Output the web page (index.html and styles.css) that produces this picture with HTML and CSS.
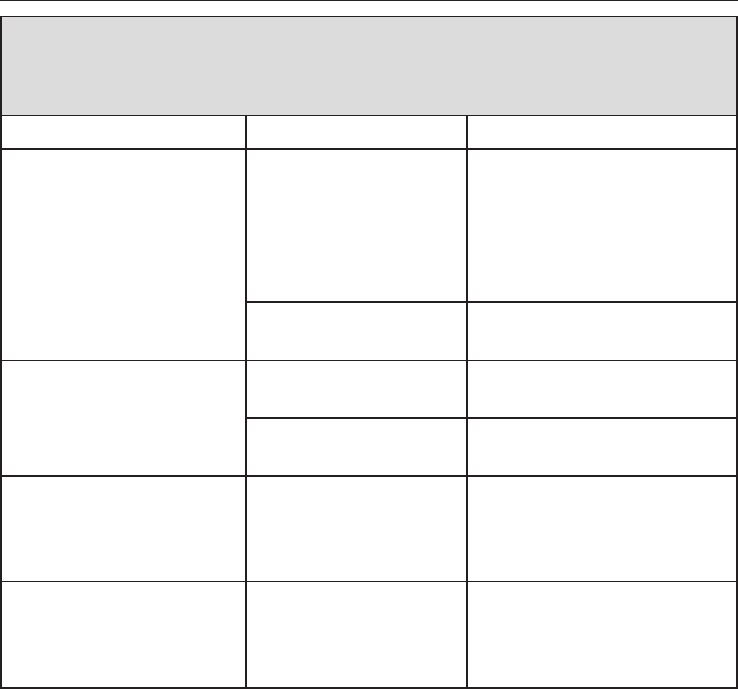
FILE: index.html
```html
<!DOCTYPE html>
<html lang="en">
<head>
<meta charset="utf-8">
<title>Table</title>
<link rel="stylesheet" href="styles.css">
</head>
<body>
<div class="rule"></div>
<div class="sheet">
  <div class="title-row"></div>
  <div class="row head-row">
    <div class="cell c1"></div>
    <div class="cell c2"></div>
    <div class="cell c3"></div>
  </div>
  <div class="row group">
    <div class="cell c1 b1"></div>
    <div class="sub">
      <div class="row a1">
        <div class="cell c2"></div>
        <div class="cell c3"></div>
      </div>
      <div class="row a2">
        <div class="cell c2"></div>
        <div class="cell c3"></div>
      </div>
    </div>
  </div>
  <div class="row group">
    <div class="cell c1 b2"></div>
    <div class="sub">
      <div class="row bb1">
        <div class="cell c2"></div>
        <div class="cell c3"></div>
      </div>
      <div class="row bb2">
        <div class="cell c2"></div>
        <div class="cell c3"></div>
      </div>
    </div>
  </div>
  <div class="row rc">
    <div class="cell c1"></div>
    <div class="cell c2"></div>
    <div class="cell c3"></div>
  </div>
  <div class="row rd">
    <div class="cell c1"></div>
    <div class="cell c2"></div>
    <div class="cell c3"></div>
  </div>
</div>
</body>
</html>
```

FILE: styles.css
```css
html, body {
  margin: 0;
  padding: 0;
  background: #ffffff;
  font-family: "Liberation Sans", Arial, sans-serif;
}
* { box-sizing: border-box; }

.rule {
  width: 738px;
  height: 1px;
  background: #231f20;
}

.sheet {
  width: 738px;
  margin-top: 15px;
  border-left: 2px solid #231f20;
  border-top: 1px solid #231f20;
}

.title-row {
  height: 99px;
  background: #dcdcdc;
  border-right: 2px solid #231f20;
  border-bottom: 1px solid #231f20;
}

.row { display: flex; }
.sub { display: flex; flex-direction: column; }

.cell { border-right: 2px solid #231f20; }
.c1 { width: 245px; }
.c2 { width: 221px; }
.c3 { width: 270px; }

.head-row .cell { height: 34px; border-bottom: 2px solid #231f20; }

.b1 { height: 211px; border-bottom: 1px solid #231f20; }
.a1 .cell { height: 153px; border-bottom: 2px solid #231f20; }
.a2 .cell { height: 58px; border-bottom: 1px solid #231f20; }

.b2 { height: 116px; border-bottom: 2px solid #231f20; }
.bb1 .cell { height: 58px; border-bottom: 2px solid #231f20; }
.bb2 .cell { height: 58px; border-bottom: 2px solid #231f20; }

.rc .cell { height: 105px; border-bottom: 1px solid #231f20; }
.rd .cell { height: 107px; border-bottom: 2px solid #231f20; }
```
